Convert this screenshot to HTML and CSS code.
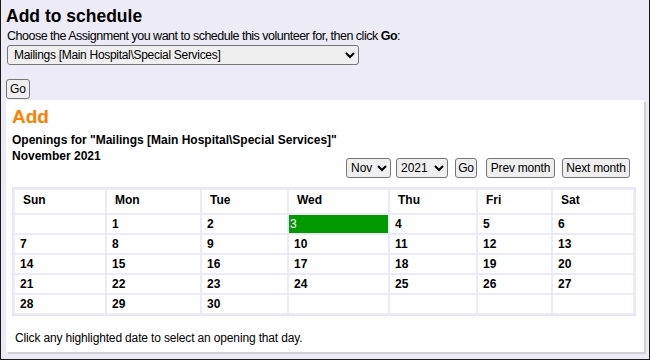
FILE: index.html
```html
<!DOCTYPE html>
<html lang="en">
<head>
	<meta charset="UTF-8">
	<title>Add to schedule</title>
	<link rel="stylesheet" href="styles.css">
</head>
<body>
    <div class="page">
        <h1 class="title">Add to schedule</h1>
        <div class="intro">Choose the Assignment you want to schedule this volunteer for, then click <b>Go</b>:</div>
        <select class="assign">
            <option>Mailings [Main Hospital\Special Services]</option>
        </select>
        <div class="go_row"><button class="btn">Go</button></div>

        <div class="panel">
            <h2 class="add">Add</h2>
            <div class="openings first">Openings for "Mailings [Main Hospital\Special Services]"</div>
            <div class="openings">November 2021</div>
            <div class="controls">
                <select class="sel sel_month"><option>Nov</option></select>
                <select class="sel sel_year"><option>2021</option></select>
                <button class="btn btn_go">Go</button>
                <button class="btn btn_prev">Prev month</button>
                <button class="btn btn_next">Next month</button>
            </div>
            <table class="cal">
                <tr>
                    <th class="c1">Sun</th><th class="c2">Mon</th><th class="c3">Tue</th><th class="c4">Wed</th><th class="c5">Thu</th><th class="c6">Fri</th><th class="c7">Sat</th>
                </tr>
                <tr><td></td><td>1</td><td>2</td><td class="open">3</td><td>4</td><td>5</td><td>6</td></tr>
                <tr><td>7</td><td>8</td><td>9</td><td>10</td><td>11</td><td>12</td><td>13</td></tr>
                <tr><td>14</td><td>15</td><td>16</td><td>17</td><td>18</td><td>19</td><td>20</td></tr>
                <tr><td>21</td><td>22</td><td>23</td><td>24</td><td>25</td><td>26</td><td>27</td></tr>
                <tr><td>28</td><td>29</td><td>30</td><td></td><td></td><td></td><td></td></tr>
            </table>
            <p class="note">Click any highlighted date to select an opening that day.</p>
        </div>
    </div>
</body>
</html>
```

FILE: styles.css
```css
html, body{
    margin: 0;
    padding: 0;
}
body{
    font-family: "Liberation Sans", Arial, sans-serif;
    color: #000;
}
.page{
    width: 650px;
    height: 360px;
    box-sizing: border-box;
    background: #ecebf6;
    border: 1px solid #1a1a1a;
    border-top: none;
    padding: 6px 5px 0 5px;
    overflow: hidden;
}
.title{
    font-size: 17.5px;
    font-weight: bold;
    line-height: 20px;
    margin: 0 0 2px 0;
}
.intro{
    font-size: 12.5px;
    letter-spacing: -0.5px;
    line-height: 16px;
    margin-left: 1px;
}
.assign{
    display: block;
    margin: 1px 0 0 1px;
    width: 352px;
    height: 20px;
    font-family: "Liberation Sans", Arial, sans-serif;
    font-size: 12px;
    letter-spacing: -0.3px;
    border: 1px solid #767676;
    border-radius: 3px;
    background: #efefef;
    padding: 0 2px;
}
.go_row{
    margin-top: 14px;
    height: 20px;
}
.btn{
    font-family: "Liberation Sans", Arial, sans-serif;
    font-size: 12px;
    letter-spacing: -0.2px;
    height: 20px;
    padding: 0 3px;
    border: 1px solid #767676;
    border-radius: 3px;
    background: #efefef;
    color: #000;
}
.panel{
    margin: 1px 0 0 0;
    width: 638px;
    height: 252px;
    box-sizing: border-box;
    background: #fff;
    box-shadow: 2px 2px 0 #cfcfd6;
    padding: 6px 8px 0 6px;
}
.add{
    margin: 0;
    font-size: 19px;
    line-height: 22px;
    font-weight: bold;
    color: #ff8000;
}
.openings{
    font-size: 12px;
    font-weight: bold;
    line-height: 16px;
}
.first{
    margin-top: 4px;
}
.controls{
    display: flex;
    justify-content: flex-end;
    align-items: center;
    margin-top: -6px;
    padding-right: 6px;
}
.sel{
    height: 20px;
    font-family: "Liberation Sans", Arial, sans-serif;
    font-size: 12px;
    border: 1px solid #767676;
    border-radius: 3px;
    background: #efefef;
}
.sel_month{
    width: 45px;
}
.sel_year{
    width: 52px;
    margin-left: 5px;
}
.btn_go{
    width: 22px;
    padding: 0;
    margin-left: 7px;
}
.btn_prev{
    width: 69px;
    padding: 0;
    margin-left: 9px;
}
.btn_next{
    width: 68px;
    padding: 0;
    margin-left: 7px;
}
.cal{
    margin-top: 9px;
    width: 624px;
    border: 1px solid #e6e4f2;
    border-spacing: 2px;
    background: #eceaf6;
    table-layout: fixed;
}
.cal th, .cal td{
    box-sizing: border-box;
    background: #fff;
    text-align: left;
    font-size: 12px;
    line-height: 16px;
    font-weight: bold;
    padding: 1px 5px;
    height: 18px;
}
.cal th{
    height: 23px;
    padding-left: 8px;
    vertical-align: top;
    padding-top: 2px;
}
.c1{ width: 90px; }
.c2{ width: 93px; }
.c3{ width: 85px; }
.c4{ width: 99px; }
.c5{ width: 86px; }
.c6{ width: 73px; }
.c7{ width: 80px; }
.cal td.open{
    background: #009900;
    color: #fff;
    font-weight: normal;
    padding-left: 1px;
}
.note{
    margin: 15px 0 0 3px;
    font-size: 12px;
    letter-spacing: -0.15px;
}
```
